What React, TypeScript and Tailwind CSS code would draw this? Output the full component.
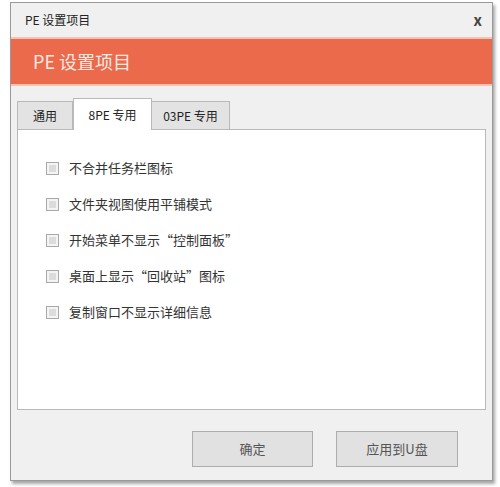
const font = { fontFamily: '"Noto Sans CJK SC", "Noto Sans", sans-serif' };

const options = [
  "不合并任务栏图标",
  "文件夹视图使用平铺模式",
  "开始菜单不显示“控制面板”",
  "桌面上显示“回收站”图标",
  "复制窗口不显示详细信息",
];

export default function App() {
  return (
    <div className="w-[500px] h-[487px] bg-white pt-[2px] pl-[10px]" style={font}>
      <div className="w-[483px] h-[479px] bg-[#f0f0f0] border border-[#9a9a9a] shadow-[2px_3px_3px_rgba(0,0,0,0.35)] flex flex-col">
        {/* title bar */}
        <div className="h-[34px] flex items-center justify-between pl-[14px] pr-[10px] text-[12px] text-[#222]">
          <span>PE 设置项目</span>
          <span className="text-[15px] text-[#444] font-semibold">x</span>
        </div>
        {/* orange header */}
        <div className="h-[49px] bg-[#ea6a4b] border-y-2 border-[#f7c2b2] flex items-center pl-[22px]">
          <span className="text-[18px] text-[#fde9e2]">PE 设置项目</span>
        </div>
        {/* tabs */}
        <div className="mt-[11px] pl-[6px] flex items-end h-[32px] text-[12px] text-[#222]">
          <div className="h-[28px] w-[56px] bg-[#e3e3e3] border border-[#b9b9b9] border-b-0 flex items-center justify-center">
            通用
          </div>
          <div className="h-[32px] w-[79px] bg-white border border-[#b9b9b9] border-b-0 flex items-center justify-center -mb-px relative z-10">
            8PE 专用
          </div>
          <div className="h-[28px] w-[78px] bg-[#e3e3e3] border border-[#b9b9b9] border-b-0 border-l-0 flex items-center justify-center">
            03PE 专用
          </div>
        </div>
        <div className="mx-[6px] h-[281px] bg-white border border-[#b9b9b9] pt-[31px] pl-[28px] flex flex-col gap-[22px]">
          {options.map((o) => (
            <label key={o} className="flex items-center gap-[10px] text-[13px] text-[#333] h-[14px]">
              <span className="w-[13px] h-[13px] border border-[#a8a8a8] bg-[#f4f4f4] flex items-center justify-center">
                <span className="w-[7px] h-[7px] bg-[#dcdcdc]" />
              </span>
              {o}
            </label>
          ))}
        </div>
        {/* buttons */}
        <div className="flex justify-end gap-[23px] pr-[34px] mt-[21px]">
          <button className="w-[121px] h-[36px] bg-[#e1e1e1] border border-[#adadad] text-[13px] text-[#555]">
            确定
          </button>
          <button className="w-[122px] h-[36px] bg-[#e1e1e1] border border-[#adadad] text-[13px] text-[#555]">
            应用到U盘
          </button>
        </div>
      </div>
    </div>
  );
}
